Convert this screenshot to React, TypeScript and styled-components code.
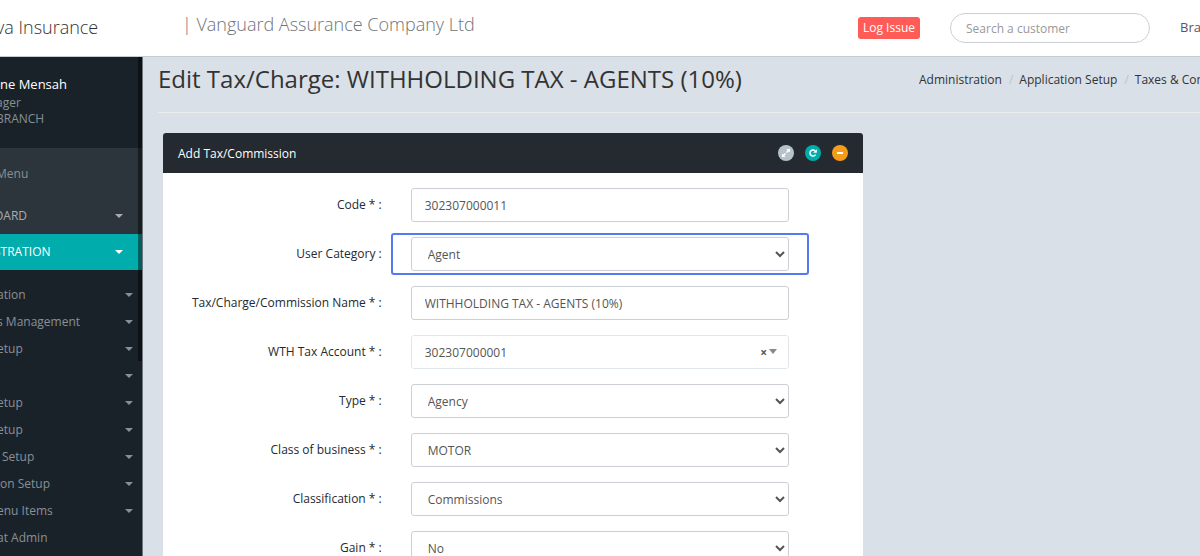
import React from "react";
import styled, { createGlobalStyle } from "styled-components";

const GlobalStyle = createGlobalStyle`
  *, *::before, *::after { box-sizing: border-box; }
  html, body, #root { height: 100%; }
  body {
    margin: 0;
    overflow: hidden;
    background: #d9e0e7;
    color: #707478;
    font: 12px/20px "Open Sans", "Liberation Sans", sans-serif;
  }
  a { color: inherit; text-decoration: none; }
  button, input, select { font: inherit; color: inherit; }
`;

const Page = styled.div`
  display: flex;
  flex-direction: column;
  height: 100vh;
  overflow: hidden;
`;

const TopBar = styled.header`
  display: flex;
  flex: none;
  align-items: center;
  height: 57px;
  background: #fff;
  border-bottom: 1px solid #c5ccd3;
  white-space: nowrap;
  overflow: hidden;
`;

const Brand = styled.a`
  flex: none;
  width: 182px;
  padding-bottom: 2px;
  font-size: 18px;
  line-height: 24px;
  font-weight: 300;
  text-indent: -4px;
  color: #333;
`;

const Company = styled.div`
  flex: 1;
  padding-bottom: 8px;
  font-size: 18px;
  line-height: 24px;
  font-weight: 300;
  color: #707478;
`;

const IssueButton = styled.button`
  height: 22px;
  padding: 0 5px;
  border: 0;
  border-radius: 3px;
  background: #ff5b57;
  color: #fff;
`;

const SearchBox = styled.input`
  width: 200px;
  height: 30px;
  margin: 0 30px;
  padding: 0 15px;
  border: 1px solid #ccd0d4;
  border-radius: 15px;
  background: #fff;
  outline: 0;
  &::placeholder { color: #999; opacity: 1; }
`;

const UserLink = styled.a`
  flex: none;
  width: 20px;
  padding-bottom: 2px;
  font-size: 13px;
  color: #585663;
`;

const Body = styled.div`
  display: flex;
  flex: 1;
  min-height: 0;
`;

const Sidebar = styled.nav`
  position: relative;
  flex: none;
  width: 143px;
  background: #1a2229;
  border-right: 1px solid #6e757c;
  overflow: hidden;
  white-space: nowrap;
`;

const ScrollThumb = styled.div`
  position: absolute;
  top: 0;
  right: 0;
  width: 4px;
  height: 304px;
  background: rgba(0, 0, 0, 0.45);
`;

const Profile = styled.div`
  height: 91px;
  padding-top: 17px;
  font-size: 12px;
  line-height: 16px;
  text-indent: -4px;
  color: #889097;
`;

const ProfileName = styled.div`
  padding-bottom: 1px;
  font-size: 13px;
  line-height: 20px;
  text-indent: 0;
  color: #fff;
`;

const MainMenu = styled.div`
  background: #2d353c;
  color: #a8acb1;
`;

const MenuHeading = styled.div`
  height: 50px;
  padding-top: 1px;
  line-height: 50px;
  text-indent: -4px;
  color: #889097;
`;

const MenuLink = styled.a<{ $active?: boolean }>`
  display: flex;
  align-items: center;
  justify-content: space-between;
  height: 36px;
  padding-right: 19px;
  text-indent: -6px;
  background: ${(p) => (p.$active ? "#00acac" : "transparent")};
  color: ${(p) => (p.$active ? "#fff" : "#a8acb1")};
`;

const SubMenu = styled.ul`
  margin: 0;
  padding: 11px 0 0;
  list-style: none;
`;

const SubLink = styled.a<{ $indent?: boolean }>`
  display: flex;
  align-items: center;
  justify-content: space-between;
  height: 27px;
  padding: 0 9px 0 ${(p) => (p.$indent ? "2px" : "0")};
  text-indent: ${(p) => (p.$indent ? "0" : "-3px")};
  color: #889097;
`;

const Caret = styled.i`
  margin-left: auto;
  border: 4px solid transparent;
  border-top-color: currentColor;
  border-bottom: 0;
`;

const Content = styled.main`
  flex: 1;
  min-width: 0;
  padding-left: 15px;
  overflow: hidden;
`;

const TitleRow = styled.div`
  display: flex;
  justify-content: space-between;
  height: 56px;
  border-bottom: 1px solid #eaecee;
  white-space: nowrap;
`;

const Title = styled.h1`
  margin: 0;
  padding-top: 6px;
  font-size: 24px;
  line-height: 32px;
  font-weight: 400;
  color: #333;
`;

const Crumbs = styled.ol`
  display: flex;
  flex: none;
  width: 281px;
  margin: 0;
  padding: 13px 0 0;
  overflow: hidden;
  list-style: none;
  color: #333;

  li + li::before {
    content: "/";
    padding: 0 6px 0 7px;
    color: #c0c4c8;
  }
`;

const Panel = styled.section`
  width: calc(67% + 2px);
  margin: 20px 0 0 5px;
  border-radius: 3px 3px 0 0;
  background: #fff;
  overflow: hidden;
`;

const PanelHead = styled.div`
  display: flex;
  align-items: center;
  gap: 11px;
  height: 40px;
  padding: 0 15px;
  background: #242a30;
`;

const PanelTitle = styled.h2`
  flex: 1;
  margin: 0;
  padding-top: 2px;
  font-size: 12px;
  line-height: 20px;
  font-weight: 400;
  color: #fff;
`;

const RoundButton = styled.button<{ $color: string }>`
  display: grid;
  place-items: center;
  width: 16px;
  height: 16px;
  padding: 0;
  border: 0;
  border-radius: 50%;
  background: ${(p) => p.$color};
  color: #fff;
`;

const Form = styled.form`
  display: grid;
  gap: 15px;
  padding: 15px 74px 15px 15px;
`;

const Field = styled.div`
  display: grid;
  grid-template-columns: 35fr 65fr;
  column-gap: 29px;
`;

const Label = styled.label`
  padding-top: 7px;
  text-align: right;
  white-space: nowrap;
  color: #242a30;
`;

const Control = styled.div`
  position: relative;
  display: flex;
`;

const Marker = styled.div`
  position: absolute;
  inset: -4px -20px;
  border: 2px solid #5578f5;
  border-radius: 3px;
  pointer-events: none;
`;

const TextBox = styled.input`
  width: 100%;
  height: 34px;
  padding: 0 13px;
  border: 1px solid #ccd0d4;
  border-radius: 3px;
  background: #fff;
  color: #555;
  outline: 0;
`;

const Select = styled.select`
  width: 100%;
  height: 34px;
  padding: 0 12px;
  border: 1px solid #ccd0d4;
  border-radius: 3px;
  background: #fff;
  color: #555;
  outline: 0;
`;

const Lookup = styled.div`
  display: flex;
  align-items: center;
  width: 100%;
  height: 34px;
  padding: 2px 11px 0 13px;
  border: 1px solid #e2e7eb;
  border-radius: 3px;
  background: #fff;
  color: #555;

  input {
    flex: 1;
    min-width: 0;
    padding: 0;
    border: 0;
    outline: 0;
    background: none;
  }
`;

const ClearButton = styled.button`
  padding: 0 2px;
  border: 0;
  background: none;
  font-weight: 700;
`;

const LookupCaret = styled.i`
  margin-bottom: 4px;
  border: 4px solid transparent;
  border-top: 5px solid #888;
  border-bottom: 0;
`;

const subItems: { text: string; caret?: boolean; indent?: boolean }[] = [
  { text: "ation", caret: true },
  { text: "s Management", caret: true },
  { text: "etup", caret: true },
  { text: "", caret: true },
  { text: "etup", caret: true },
  { text: "etup", caret: true },
  { text: "Setup", caret: true, indent: true },
  { text: "ion Setup", caret: true },
  { text: "enu Items", caret: true },
  { text: "at Admin" },
];

type FieldSpec = {
  id: string;
  label: string;
  value: string;
  kind: "text" | "select" | "lookup";
  marked?: boolean;
};

const fields: FieldSpec[] = [
  { id: "code", label: "Code * :", value: "302307000011", kind: "text" },
  { id: "category", label: "User Category :", value: "Agent", kind: "select", marked: true },
  { id: "name", label: "Tax/Charge/Commission Name * :", value: "WITHHOLDING TAX - AGENTS (10%)", kind: "text" },
  { id: "account", label: "WTH Tax Account * :", value: "302307000001", kind: "lookup" },
  { id: "type", label: "Type * :", value: "Agency", kind: "select" },
  { id: "business", label: "Class of business * :", value: "MOTOR", kind: "select" },
  { id: "classification", label: "Classification * :", value: "Commissions", kind: "select" },
  { id: "gain", label: "Gain * :", value: "No", kind: "select" },
];

function FieldControl({ id, value, kind }: FieldSpec) {
  if (kind === "select") {
    return (
      <Select id={id} defaultValue={value}>
        <option>{value}</option>
      </Select>
    );
  }
  if (kind === "lookup") {
    return (
      <Lookup>
        <input id={id} defaultValue={value} />
        <ClearButton type="button" aria-label="Clear">×</ClearButton>
        <LookupCaret />
      </Lookup>
    );
  }
  return <TextBox id={id} defaultValue={value} />;
}

export default function App() {
  return (
    <>
      <GlobalStyle />
      <Page>
        <TopBar>
          <Brand href="#">va Insurance</Brand>
          <Company>| Vanguard Assurance Company Ltd</Company>
          <IssueButton type="button">Log Issue</IssueButton>
          <SearchBox aria-label="Search a customer" placeholder="Search a customer" />
          <UserLink href="#">Bra</UserLink>
        </TopBar>
        <Body>
          <Sidebar>
            <Profile>
              <ProfileName>ne Mensah</ProfileName>
              <div>ager</div>
              <div>BRANCH</div>
            </Profile>
            <MainMenu>
              <MenuHeading>Menu</MenuHeading>
              <MenuLink href="#">OARD<Caret /></MenuLink>
              <MenuLink href="#" $active>STRATION<Caret /></MenuLink>
            </MainMenu>
            <SubMenu>
              {subItems.map((item, i) => (
                <li key={i}>
                  <SubLink href="#" $indent={item.indent}>
                    {item.text}
                    {item.caret && <Caret />}
                  </SubLink>
                </li>
              ))}
            </SubMenu>
            <ScrollThumb />
          </Sidebar>
          <Content>
            <TitleRow>
              <Title>Edit Tax/Charge: WITHHOLDING TAX - AGENTS (10%)</Title>
              <Crumbs>
                <li><a href="#">Administration</a></li>
                <li><a href="#">Application Setup</a></li>
                <li><a href="#">Taxes &amp; Com</a></li>
              </Crumbs>
            </TitleRow>
            <Panel>
              <PanelHead>
                <PanelTitle>Add Tax/Commission</PanelTitle>
                <RoundButton type="button" aria-label="Expand" $color="#b6c2c9">
                  <svg width="10" height="10" viewBox="0 0 10 10" fill="currentColor">
                    <path d="M5.500 1H9v3.500L7.800 3.300 6 5.100 4.900 4 6.700 2.200zM4.500 9H1V5.500l1.200 1.200L4 4.900 5.100 6 3.300 7.800z" />
                  </svg>
                </RoundButton>
                <RoundButton type="button" aria-label="Reload" $color="#00acac">
                  <svg width="10" height="10" viewBox="0 0 10 10">
                    <path d="M7.600 6.500A3 3 0 1 1 7.200 3" fill="none" stroke="currentColor" strokeWidth="1.500" />
                    <path d="M8.800 1.200v3.600H5.200z" fill="currentColor" />
                  </svg>
                </RoundButton>
                <RoundButton type="button" aria-label="Collapse" $color="#f59c1a">
                  <svg width="10" height="10" viewBox="0 0 10 10">
                    <rect x="2" y="4" width="6" height="2" rx="0.500" fill="currentColor" />
                  </svg>
                </RoundButton>
              </PanelHead>
              <Form>
                {fields.map((f) => (
                  <Field key={f.id}>
                    <Label htmlFor={f.id}>{f.label}</Label>
                    <Control>
                      <FieldControl {...f} />
                      {f.marked && <Marker />}
                    </Control>
                  </Field>
                ))}
              </Form>
            </Panel>
          </Content>
        </Body>
      </Page>
    </>
  );
}
